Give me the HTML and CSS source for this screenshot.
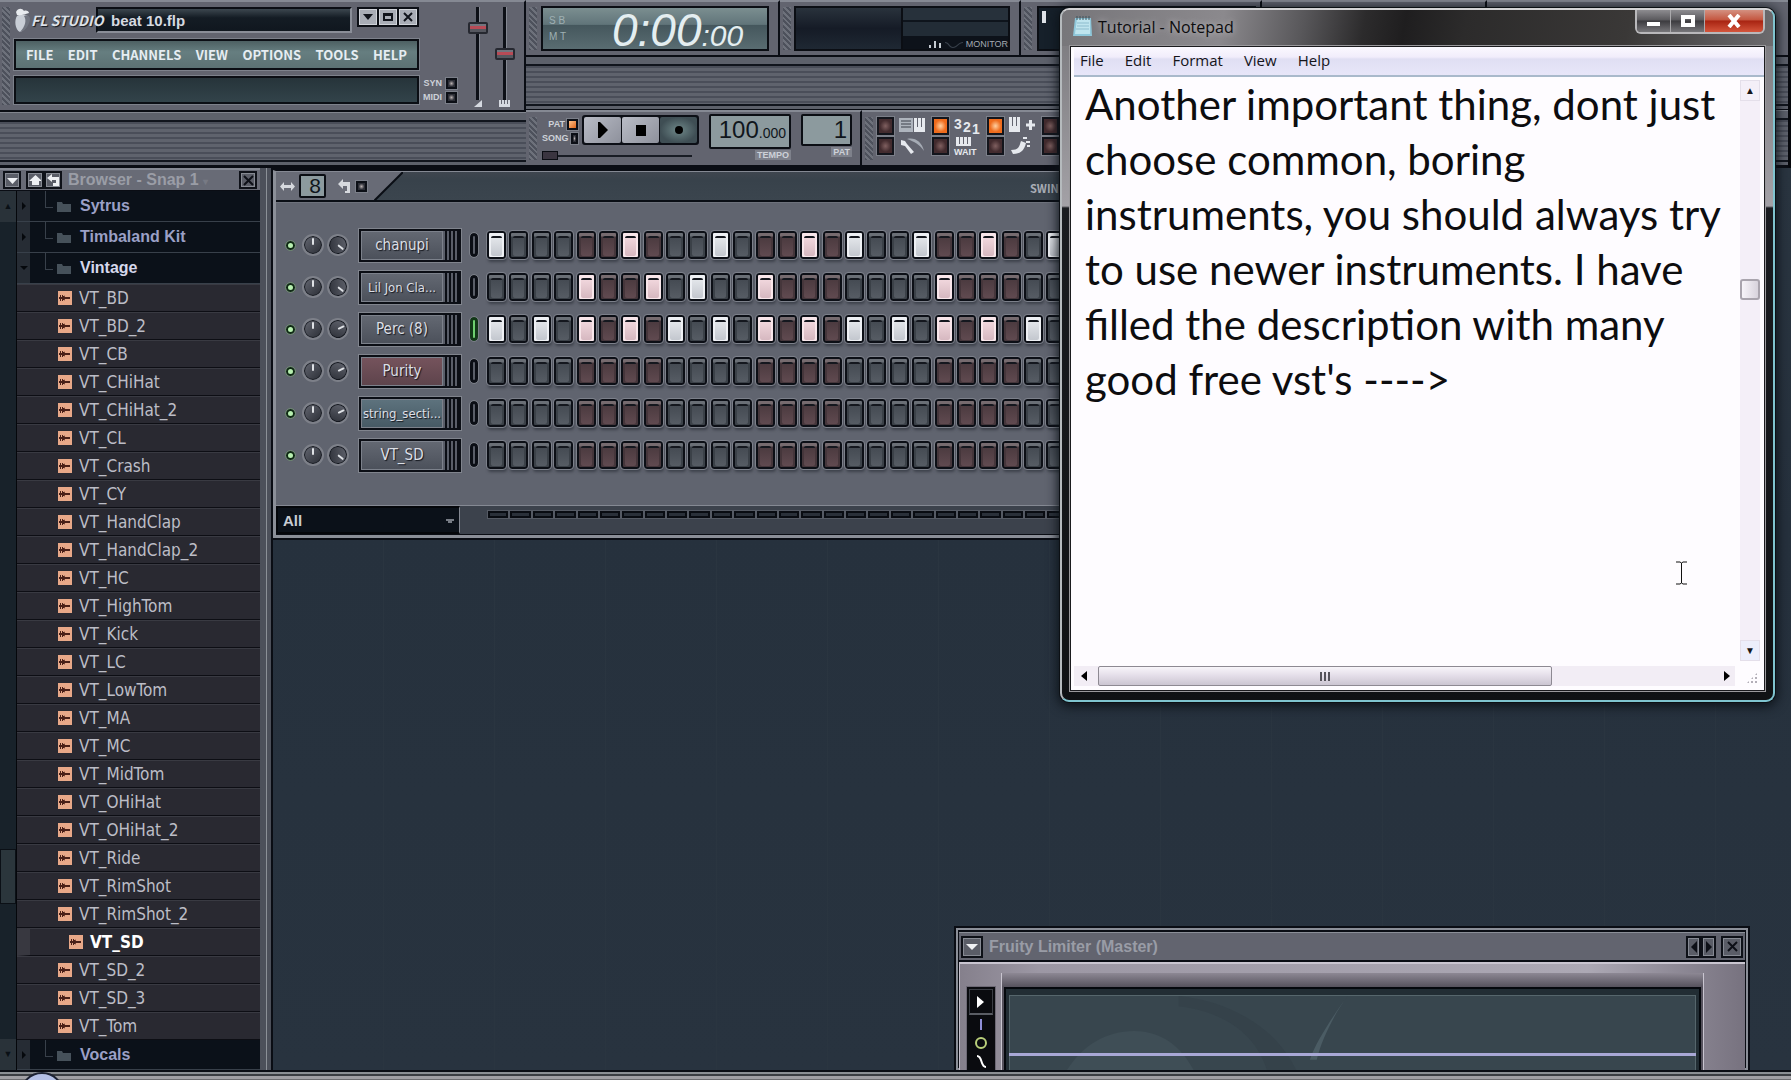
FILE: index.html
```
<!DOCTYPE html>
<html lang="en">

<head>
    <meta charset="UTF-8">
    <meta name="viewport" content="width=device-width, initial-scale=1.0">
    <title>FL Studio - beat 10.flp</title>
    <link rel="stylesheet" href="styles.css">
</head>

<body>
    <header class="toolbars">
        <div class="left-bars">
            <div class="main-panel">
                <div class="grip"></div>
                <div class="main-left">
                    <div class="title-row">
                        <div class="logo">
                            <svg width="17" height="25" viewBox="0 0 17 25">
                                <path d="M3 8C0 12 1 22 6 24c5-1 9-9 9-13 0-3-3-5-6-4-2-1-4 0-6 1z" fill="#c9ced6" />
                                <path d="M10 8c3 4 1 11-4 16 6-1 10-9 10-13 0-3-3-5-6-3z" fill="#70747f" />
                                <path d="M2 4c2-4 6-4 8-1 2-1 5 0 5 2-4 1-8 3-12 2z" fill="#e8ebef" />
                            </svg>
                            <span>FL STUDIO</span>
                        </div>
                        <div class="song-title">beat 10.flp</div>
                        <div class="window-buttons">
                            <button aria-label="Minimize"><svg width="12" height="10"><path d="M1 2h10L6 8z" /></svg></button>
                            <button aria-label="Maximize"><svg width="12" height="10"><path d="M1 1h10v8H1zM3 4v3h6V4z" fill-rule="evenodd" /></svg></button>
                            <button aria-label="Close"><svg width="12" height="10"><path d="M2 1l8 8M10 1L2 9" stroke="#10131b" stroke-width="2" /></svg></button>
                        </div>
                    </div>
                    <nav class="main-menu">
                        <button>FILE</button>
                        <button>EDIT</button>
                        <button>CHANNELS</button>
                        <button>VIEW</button>
                        <button>OPTIONS</button>
                        <button>TOOLS</button>
                        <button>HELP</button>
                    </nav>
                    <div class="hint-bar"></div>
                </div>
                <div class="io">
                    <div>SYN <i class="tiny-led"></i></div>
                    <div>MIDI <i class="tiny-led"></i></div>
                </div>
                <div class="fader">
                    <input type="range" value="81" aria-label="Main volume">
                    <svg width="8" height="7"><path d="M8 0v7H0z" /></svg>
                </div>
                <div class="fader">
                    <input type="range" value="49" aria-label="Main pitch">
                    <svg width="11" height="7"><path d="M0 0h2v4h1V0h2v4h1V0h2v4h1V0h2v7H0z" /></svg>
                </div>
            </div>
            <div class="stripes"></div>
        </div>

        <div class="right-bars">
            <div class="panel-row">
                <div class="panel time-panel">
                    <div class="grip"></div>
                    <div class="lcd clock">
                        <div class="clock-mode"><span>S B</span><span>M T</span></div>
                        <div class="clock-time">0:00<small>:00</small></div>
                    </div>
                </div>
                <div class="panel monitor-panel">
                    <div class="grip"></div>
                    <div class="scope">
                        <div class="scope-wave"></div>
                        <div class="scope-spectrum">
                            <svg width="34" height="10"><path d="M1 9V6M6 9V2M11 9V4" stroke="#c5cbd2" stroke-width="2" /><path d="M16 3c4 0 5 5 8 5s6-5 10-5v1c-4 0-6 5-10 5s-5-5-8-5z" fill="#38404b" /></svg>
                            <span>MONITOR</span>
                        </div>
                    </div>
                </div>
                <div class="panel cpu-panel">
                    <div class="grip"></div>
                    <div class="cpu"><i></i></div>
                </div>
                <div class="panel blank-panel"></div>
                <div class="panel last-panel"></div>
            </div>
            <div class="stripes"></div>
            <div class="panel-row">
                <div class="panel transport">
                    <div class="grip"></div>
                    <div class="transport-left">
                        <div class="play-row">
                            <div class="mode">
                                <div>PAT <i class="tiny-led lit"></i></div>
                                <div>SONG <i class="tiny-led"></i></div>
                            </div>
                            <div class="play-buttons">
                                <button aria-label="Play"><svg width="12" height="16"><path d="M1 0h2l8 8-8 8H1z" /></svg></button>
                                <button aria-label="Stop"><svg width="10" height="11"><path d="M0 0h10v11H0z" /></svg></button>
                                <button aria-label="Record" class="record"><svg width="12" height="12"><circle cx="6" cy="6" r="4" /></svg></button>
                            </div>
                        </div>
                        <input type="range" class="song-pos" value="0" aria-label="Song position">
                    </div>
                    <div class="readout tempo">
                        <output>100<small>.000</small></output>
                        <span>TEMPO</span>
                    </div>
                    <div class="readout pat">
                        <output>1</output>
                        <span>PAT</span>
                    </div>
                </div>
                <div class="panel switches">
                    <div class="grip"></div>
                    <div class="switch-grid" id="switches"></div>
                </div>
                <div class="stripes"></div>
            </div>
        </div>
    </header>

    <main>
        <aside class="browser">
            <div class="browser-title">
                <button class="box-btn" aria-label="Menu"><svg width="11" height="11"><path d="M0 3h11L5.500 9z" /></svg></button>
                <div class="btn-pair">
                    <button class="box-btn" aria-label="Up"><svg width="13" height="11"><path d="M6.500 0L13 6h-3v4H3V6H0z" /></svg></button>
                    <button class="box-btn" aria-label="Back"><svg width="13" height="12"><path d="M0 4l5-4v3h8v9H6V9h3V6H5v2z" /></svg></button>
                </div>
                <h2>Browser - Snap 1 <small>&#9662;</small></h2>
                <button class="box-btn close" aria-label="Close"><svg width="11" height="11"><path d="M1 1l9 9M10 1l-9 9" /></svg></button>
            </div>
            <div class="browser-body">
                <div class="tree-scroll">
                    <span class="arrow">&#9650;</span>
                    <span class="tree-thumb"></span>
                    <span class="arrow">&#9660;</span>
                </div>
                <ul class="tree" id="tree"></ul>
            </div>
        </aside>

        <section class="desktop">
            <div class="rack">
                <div class="rack-top">
                    <div class="rack-tab">
                        <svg width="15" height="11"><path d="M0 5.500L4 1v3h7V1l4 4.500L11 10V7H4v3z" /></svg>
                        <output>8</output>
                        <svg width="12" height="14"><path d="M0 5l5-5v3h7v11H7v-2h2V7H5v3z" /></svg>
                        <i class="tiny-led"></i>
                    </div>
                    <svg class="slant" width="29" height="29"><path d="M0 0h29L0 29z" fill="#686b76" /><path d="M29 0L0 29" stroke="#0a0e15" stroke-width="2" /></svg>
                    <span class="swing">SWING</span>
                </div>
                <div class="channels" id="channels"></div>
                <div class="rack-foot">
                    <select aria-label="Channel filter">
                        <option>All</option>
                    </select>
                    <div class="step-marks" id="marks"></div>
                </div>
            </div>

            <div class="limiter">
                <div class="limiter-title">
                    <button class="box-btn" aria-label="Menu"><svg width="12" height="11"><path d="M0 3h12L6 9z" /></svg></button>
                    <h2>Fruity Limiter (Master)</h2>
                    <div class="btn-pair">
                        <button class="box-btn slim" aria-label="Previous"><svg width="6" height="12"><path d="M6 0v12L0 6z" /></svg></button>
                        <button class="box-btn slim" aria-label="Next"><svg width="6" height="12"><path d="M0 0v12l6-6z" /></svg></button>
                    </div>
                    <button class="box-btn close" aria-label="Close"><svg width="11" height="11"><path d="M1 1l9 9M10 1l-9 9" /></svg></button>
                </div>
                <div class="limiter-body">
                    <div class="limiter-side">
                        <button aria-label="Expand"><svg width="8" height="12"><path d="M0 0l7 6-7 6z" fill="#fff" /></svg></button>
                        <div class="limiter-tools">
                            <svg width="14" height="54" fill="none" stroke-width="2">
                                <path d="M7 4v11" stroke="#8f8fd8" />
                                <circle cx="7" cy="28" r="5" stroke="#b9cf7a" />
                                <path d="M3 41c6 0 3 11 9 11" stroke="#fff" />
                            </svg>
                        </div>
                    </div>
                    <div class="limiter-bevel">
                        <div class="limiter-screen">
                            <svg viewBox="0 0 690 76" preserveAspectRatio="none">
                                <path d="M55 76C70 50 95 34 125 34s50 18 62 42z" fill="#3f4e56" />
                                <path d="M170 10c50 6 80 30 90 66h30C270 30 220 5 170 0z" fill="#35424a" />
                                <path d="M340 0c-15 20-32 45-38 62h7c5-20 18-45 31-62z" fill="#4b5c64" />
                            </svg>
                            <hr>
                        </div>
                    </div>
                </div>
            </div>
        </section>
    </main>

    <footer class="taskbar"><i class="orb"></i></footer>

    <div class="notepad">
        <div class="notepad-title">
            <svg width="21" height="23" viewBox="0 0 21 23">
                <path d="M3 3h16l1 18H1z" fill="#8fc7da" />
                <path d="M5 4h13v15H3z" fill="#bfe4ee" />
                <path d="M5 8h12M5 11h12M4 14h13" stroke="#8dbccd" />
                <path d="M5 1v4M8 1v4M11 1v4M14 1v4M17 1v4" stroke="#3d5661" />
            </svg>
            <h1>Tutorial - Notepad</h1>
            <div class="caption-buttons">
                <button aria-label="Minimize"><svg width="16" height="14"><path d="M1 8h13v4H1z" fill="#fff" /></svg></button>
                <button aria-label="Maximize"><svg width="16" height="14"><path d="M1 1h14v12H1zM5 5v4h6V5z" fill="#fff" fill-rule="evenodd" /></svg></button>
                <button aria-label="Close" class="close-btn"><svg width="14" height="14"><path d="M2 1l10 12M12 1L2 13" stroke="#fff" stroke-width="4" /></svg></button>
            </div>
        </div>
        <div class="notepad-inner">
            <nav class="notepad-menu">
                <button>File</button>
                <button>Edit</button>
                <button>Format</button>
                <button>View</button>
                <button>Help</button>
            </nav>
            <div class="notepad-page">
                <textarea aria-label="Text" spellcheck="false">Another important thing, dont just
choose common, boring
instruments, you should always try
to use newer instruments. I have
filled the description with many
good free vst's ----&gt;</textarea>
                <div class="v-scroll">
                    <span class="v-arrow">&#9650;</span>
                    <span class="v-thumb"></span>
                    <span class="v-arrow down">&#9660;</span>
                </div>
                <div class="h-scroll">
                    <svg width="6" height="10"><path d="M6 0v10L0 5z" /></svg>
                    <span class="h-thumb"><i></i><i></i><i></i></span>
                    <svg width="6" height="10"><path d="M0 0v10l6-5z" /></svg>
                </div>
                <div class="resize-grip"></div>
                <svg class="ibeam" width="11" height="24"><path d="M0 1h4l1.500 1L7 1h4M0 23h4l1.500-1L7 23h4M5.500 2v20" fill="none" stroke="#111" stroke-width="1" /></svg>
            </div>
        </div>
    </div>

    <script>
        const tree = document.querySelector("#tree")
        const channels = document.querySelector("#channels")
        const marks = document.querySelector("#marks")
        const switches = document.querySelector("#switches")

        const samples = ["BD", "BD_2", "CB", "CHiHat", "CHiHat_2", "CL", "Crash", "CY", "HandClap", "HandClap_2",
            "HC", "HighTom", "Kick", "LC", "LowTom", "MA", "MC", "MidTom", "OHiHat", "OHiHat_2", "Ride",
            "RimShot", "RimShot_2", "SD", "SD_2", "SD_3", "Tom"]

        const rack = [
            { name: "chanupi", pan: "low", on: [0, 6, 10, 14, 16, 19, 22, 25] },
            { name: "Lil Jon Cla...", pan: "low", small: true, on: [4, 7, 9, 12, 20] },
            { name: "Perc (8)", pan: "high", selected: true, on: [0, 2, 4, 6, 8, 10, 12, 14, 16, 18, 20, 22, 24] },
            { name: "Purity", pan: "high", color: "red", on: [] },
            { name: "string_secti...", pan: "high", color: "blue", small: true, on: [] },
            { name: "VT_SD", pan: "low", on: [] }
        ]

        const switchIcons = [
            [false, '<path d="M0 1h14v14H0z" fill="#aeb4bd" /><path d="M2 4h10M2 7h10M2 10h10" stroke="#3c414b" /><path d="M15 1h3v9h1V1h3v9h1V1h3v14H15z" />'],
            [true, '<text x="0" y="12">3</text><text x="9" y="15">2</text><text x="18" y="17">1</text>'],
            [true, '<path d="M0 0h3v9h1V0h3v9h1V0h3v15H0z" /><path d="M17 8h9M21.500 3v10" stroke="#e6e9ee" stroke-width="3" />'],
            [false, ''],
            [false, '<path d="M2 3l4 1 2 3 7 8-3 2-6-8-4-1z" /><path d="M8 2c8-2 15 3 17 12-5-7-9-9-17-12z" fill="#a5abb4" />'],
            [false, '<path d="M2 0h3v7h1V0h3v7h1V0h3v7h1V0h3v9H2z" /><text x="0" y="18" class="wait">WAIT</text>'],
            [false, '<path d="M2 13c8 0 8-3 10-9l5 2c-2 8-6 11-13 11z" /><path d="M14 1h4M17 5h4M18 9h3" stroke="#e6e9ee" stroke-width="2" />'],
            [false, '']
        ]

        function folder(name, cls) {
            return `
                <li class="folder ${cls}">
                    <span class="expander"></span>
                    <svg width="15" height="12"><path d="M0 2h5l1 2h9v8H0z" /></svg>
                    <span>${name}</span>
                </li>`
        }

        function sample(name) {
            return `
                <li class="sample ${name == "SD" ? "current" : ""}">
                    <svg width="14" height="14"><path d="M0 0h14v14H0z" fill="#e8a888" /><path d="M1 6h1V4h1v2h1V4h1v1h1V4l1 2h5v2H7l-1 2V9H5v1H4V8H3v2H2V8H1z" fill="#4a2018" /></svg>
                    <span>VT_${name}</span>
                </li>`
        }

        tree.innerHTML = folder("Sytrus", "") + folder("Timbaland Kit", "") + folder("Vintage", "open")
            + samples.map(sample).join("") + folder("Vocals", "last")

        channels.innerHTML = rack.map(ch => {
            let steps = ""
            for (let i = 0; i < 32; i++) {
                steps += `<input type="checkbox" aria-label="${ch.name} step ${i + 1}" ${ch.on.includes(i) ? "checked" : ""}>`
            }
            return `
                <div class="channel">
                    <i class="mute"></i>
                    <i class="knob"></i>
                    <i class="knob ${ch.pan}"></i>
                    <button class="channel-name ${ch.color || ""} ${ch.small ? "small" : ""}"><span>${ch.name}</span></button>
                    <i class="slot ${ch.selected ? "selected" : ""}"></i>
                    <div class="steps">${steps}</div>
                </div>`
        }).join("")

        marks.innerHTML = "<i></i>".repeat(32)

        switches.innerHTML = switchIcons.map(([lit, icon]) => `
            <i class="led ${lit ? "lit" : ""}"></i><svg width="28" height="18">${icon}</svg>`).join("")
    </script>
</body>

</html>
```
FILE: styles.css
```
* {
    box-sizing: border-box;
}

body {
    margin: 0;
    height: 100vh;
    display: flex;
    flex-direction: column;
    overflow: hidden;
    position: relative;
    background-color: #27323e;
    font-family: "Liberation Sans", Arial, sans-serif;
}

button {
    border: 0;
    padding: 0;
    background: none;
    font-family: inherit;
    color: inherit;
    display: flex;
    align-items: center;
    justify-content: center;
}

h1,
h2 {
    margin: 0;
    font-size: 16px;
}

/* toolbars */
.toolbars {
    display: grid;
    grid-template-columns: 526px 1fr;
    height: 168px;
    flex: none;
    border-right: 3px solid #07090d;
    border-bottom: 2px solid #0a0d14;
    color: #cdd1d8;
    background-color: #62646f;
}

.left-bars,
.right-bars {
    display: flex;
    flex-direction: column;
    min-width: 0;
}

.stripes {
    flex: 1;
    border-top: 1px solid #81858e;
    border-bottom: 1px solid #0a0d14;
    padding: 7px 0;
    background-color: #5d616b;
    position: relative;
}

.stripes::before {
    content: "";
    display: block;
    height: 100%;
    border-top: 2px solid #11151d;
    border-bottom: 2px solid #11151d;
    background: repeating-linear-gradient(#4a4e59 0 2px, #5f636d 2px 5px);
}

.grip {
    width: 8px;
    align-self: stretch;
    margin: 5px 0;
    background: repeating-linear-gradient(45deg, #4d515c 0 2px, #6d717b 2px 4px);
}

.main-panel {
    display: flex;
    height: 112px;
    padding: 1px 0;
    border-top: 2px solid #858993;
    border-right: 2px solid #0a0d14;
    border-bottom: 2px solid #0a0d14;
}

.main-panel .grip {
    margin: 4px 4px 4px 2px;
}

.main-left {
    width: 405px;
    padding-top: 4px;
    display: flex;
    flex-direction: column;
    gap: 6px;
}

.title-row {
    display: flex;
    height: 26px;
}

.logo {
    display: flex;
    align-items: center;
    width: 82px;
    font: italic bold 14px/24px "Noto Sans CJK SC", "Liberation Sans", sans-serif;
    color: #dde1e8;
    text-shadow: 1px 1px 1px #14171f;
    white-space: nowrap;
}

.logo svg {
    flex: none;
}

/* the logo runs a little over the title display */
.logo span {
    z-index: 1;
}

.song-title {
    flex: 1;
    border: 2px solid #0b0e14;
    border-right-color: #8a8e98;
    border-bottom-color: #8a8e98;
    background: linear-gradient(#3c474f, #141c24 40%, #10171f);
    color: #d5d9e0;
    font-weight: bold;
    font-size: 15px;
    line-height: 24px;
    padding-left: 13px;
}

.window-buttons {
    display: flex;
    gap: 2px;
    height: 20px;
    margin-left: 5px;
    padding: 2px;
    background-color: #0c0f16;
}

.window-buttons button {
    width: 18px;
    background-color: #a9adb6;
    border: 1px solid #d0d3d9;
}

.window-buttons svg {
    fill: #10131b;
}

.main-menu {
    display: flex;
    justify-content: space-between;
    height: 31px;
    padding: 0 10px;
    border: 2px solid #0b0e14;
    background: linear-gradient(#4d6062, #667e80 40%, #5c7274);
    outline: 1px solid #7d818b;
}

.main-menu button {
    font: bold 13px/26px "Noto Sans CJK SC", "Liberation Sans", sans-serif;
    color: #e6edf2;
}

.hint-bar {
    height: 28px;
    border: 2px solid #0b0e14;
    background: linear-gradient(#26343a, #32434a);
    outline: 1px solid #7d818b;
}

.io {
    display: flex;
    flex-direction: column;
    justify-content: flex-end;
    gap: 2px;
    width: 43px;
    padding: 0 5px 6px 0;
    font-size: 9px;
    font-weight: bold;
}

.io div,
.mode div {
    display: flex;
    justify-content: flex-end;
    align-items: center;
    gap: 4px;
    height: 12px;
}

.tiny-led {
    width: 11px;
    height: 11px;
    border: 2px solid #0c0f16;
    background: radial-gradient(#b8b0b0, #2c2e36 60%);
    outline: 1px solid #7b7f89;
}

.tiny-led.lit {
    background: linear-gradient(135deg, #ffc28a, #e0661c);
}

.fader {
    display: flex;
    flex-direction: column;
    align-items: center;
    width: 27px;
    padding-top: 4px;
}

.fader svg {
    fill: #d5d9e0;
}

.fader input {
    appearance: none;
    writing-mode: vertical-lr;
    direction: rtl;
    width: 20px;
    height: 93px;
    margin: 0;
    background: linear-gradient(90deg, transparent 8px, #0d1017 8px 11px, #858993 11px 12px, transparent 12px);
}

.fader input::-webkit-slider-thumb {
    appearance: none;
    width: 20px;
    height: 12px;
    border: 2px solid #262830;
    border-radius: 2px;
    background: linear-gradient(#72747e 2px, #b84a56 2px 5px, #55575f 5px);
}

.io+.fader {
    margin-left: 2px;
}

.panel-row {
    display: flex;
    height: 56px;
    flex: none;
}

.panel {
    display: flex;
    flex: none;
    border-top: 2px solid #858993;
    border-right: 2px solid #0a0d14;
    border-bottom: 1px solid #0a0d14;
    background-color: #62646f;
    padding-left: 3px;
}

.right-bars>.stripes {
    border-top-color: #0a0d14;
}

.time-panel {
    width: 254px;
}

.lcd {
    display: flex;
    margin: 4px 0 4px 4px;
    width: 228px;
    border: 2px solid #0b0e14;
    background: linear-gradient(#7b8e90, #61757a 40%, #45575d 42%, #596c71);
}

.clock-mode {
    display: flex;
    flex-direction: column;
    justify-content: space-around;
    padding: 5px 0 5px 6px;
    width: 69px;
    font-size: 10px;
    color: #9fb0b3;
}

.clock-time {
    font: italic 46px/44px "Liberation Sans", sans-serif;
    color: #e4eef0;
}

.clock-time small {
    font-size: 30px;
}

.monitor-panel {
    width: 241px;
}

.scope {
    display: flex;
    width: 216px;
    margin: 4px 0 4px 3px;
    border: 2px solid #0b0e14;
    background-color: #1c2530;
}

.scope-wave {
    width: 107px;
    border-right: 2px solid #0b0e14;
    background: linear-gradient(#29323c, #151b26 50%, #1f2833);
}

.scope-spectrum {
    flex: 1;
    display: flex;
    align-items: flex-end;
    justify-content: flex-end;
    font-size: 9px;
    background: linear-gradient(#27313b 12px, #0e141c 12px 14px, #222c36 14px 28px, #0d121a 28px);
}

.scope-spectrum span {
    margin-left: 3px;
    color: #a4a9b1;
}

.cpu-panel {
    width: 241px;
}

.cpu {
    flex: 1;
    margin: 4px 4px 4px 5px;
    padding: 3px;
    border: 2px solid #0b0e14;
    background-color: #16202a;
}

.cpu i {
    display: block;
    width: 4px;
    height: 12px;
    background-color: #dfe3e8;
}

.blank-panel {
    width: 225px;
}

.last-panel {
    flex: 1;
    border-right: 0;
}

/* transport */
.transport {
    width: 336px;
}

.transport-left {
    margin-left: 5px;
    width: 157px;
}

.play-row {
    display: flex;
    justify-content: space-between;
    padding-top: 3px;
}

.mode {
    width: 40px;
    padding: 2px 4px 0 0;
    font-size: 9px;
    font-weight: bold;
}

.mode div {
    height: 14px;
    gap: 2px;
}

.play-buttons {
    display: flex;
    height: 30px;
    background-color: #0c0f16;
    border: 2px solid #0c0f16;
    border-radius: 3px;
    gap: 1px;
}

.play-buttons button {
    width: 37px;
    background: linear-gradient(135deg, #b9bcc6, #8e919c);
    border-radius: 2px;
}

.play-buttons .record {
    background: radial-gradient(#6e8788, #3f4e54 70%);
}

.song-pos {
    appearance: none;
    width: 150px;
    height: 9px;
    margin: 6px 0 0;
    display: block;
    background: linear-gradient(transparent 4px, #181c24 4px 6px, transparent 6px);
}

.song-pos::-webkit-slider-thumb {
    appearance: none;
    width: 16px;
    height: 9px;
    border: 1px solid #0b0e14;
    background-color: #3a3540;
}

.readout {
    display: flex;
    flex-direction: column;
    align-items: flex-end;
    margin: 2px 0 0 10px;
    font-size: 9px;
    font-weight: bold;
}

.readout output,
.rack-tab output {
    width: 100%;
    border: 2px solid #0b0e14;
    border-radius: 2px;
    background-color: #8c9a9e;
    color: #10161c;
    text-align: right;
    font: 24px/28px "Liberation Sans", sans-serif;
    padding-right: 3px;
    white-space: nowrap;
}

.readout small {
    font-size: 14px;
}

.readout span {
    margin-top: 1px;
    padding: 0 2px;
    background-color: #7e818b;
}

.tempo {
    width: 82px;
}

.pat {
    width: 51px;
}

.switches {
    width: 260px;
}

.switch-grid {
    display: grid;
    grid-template-columns: repeat(4, 17px 28px);
    grid-auto-rows: 18px;
    column-gap: 5px;
    row-gap: 2px;
    padding: 5px 0 0 4px;
}

.switch-grid svg {
    fill: #e6e9ee;
    font: bold 14px "Liberation Sans", sans-serif;
    overflow: visible;
}

.switch-grid .wait {
    font-size: 9px;
}

.led {
    border: 2px solid #13151c;
    background: radial-gradient(#806060, #422b2e 60%);
    outline: 1px solid #7b7f89;
}

.led.lit {
    background: radial-gradient(#ffd0a0, #ee6b1c 60%);
}

/* main area */
main {
    flex: 1;
    min-height: 0;
    display: flex;
}

.browser {
    width: 273px;
    display: flex;
    flex-direction: column;
    border-right: 2px solid #0a0d14;
    background: linear-gradient(90deg, #0a0d14 260px, #4c505a 260px 266px, #8b9097 266px 267px, #4c505a 267px);
}

.browser-title {
    display: flex;
    align-items: center;
    height: 23px;
    width: 260px;
    padding: 0 3px;
    background-color: #686b76;
    border-bottom: 1px solid #0a0d14;
    border-top: 2px solid #858993;
}

.browser-title h2 {
    flex: 1;
    padding-left: 6px;
    color: #9a9da6;
    white-space: nowrap;
}

.browser-title small {
    font-size: 10px;
    color: #777a84;
}

.box-btn {
    width: 18px;
    height: 18px;
    border: 2px solid #0e1118;
    background-color: #5a5d67;
    outline: 1px solid #868a93;
    outline-offset: -3px;
}

.box-btn svg {
    fill: #eef0f3;
}

.box-btn.close svg {
    stroke: #0d1017;
    stroke-width: 2;
}

.btn-pair {
    display: flex;
}

.browser-title .btn-pair {
    margin-left: 5px;
}

.browser-body {
    flex: 1;
    min-height: 0;
    display: flex;
    width: 260px;
}

.tree-scroll {
    width: 17px;
    display: flex;
    flex-direction: column;
    border-right: 1px solid #05070b;
    background-color: #18222a;
}

.arrow {
    height: 31px;
    background-color: #293239;
    color: #0a1016;
    font-size: 9px;
    line-height: 31px;
    text-align: center;
}

.tree-thumb {
    height: 55px;
    margin: auto 0 135px;
    border: 1px solid #0b1016;
    background-color: #2b363c;
}

.tree {
    flex: 1;
    margin: 0;
    padding: 0;
    list-style: none;
    overflow: hidden;
}

.tree li {
    display: flex;
    align-items: center;
}

.folder {
    position: relative;
    height: 31px;
    border-bottom: 1px solid #38404a;
    background-color: #0b1119;
    color: #9ba0c6;
    font-weight: bold;
    font-size: 16px;
}

.folder svg {
    fill: #46515a;
    width: 14px;
    margin: 0 9px 0 14px;
}

.folder.open {
    color: #d6d8ec;
}

.folder.last {
    height: 30px;
}

.expander {
    display: flex;
    align-items: center;
    width: 13px;
    height: 100%;
    margin-right: 13px;
    background-color: #262c34;
}

.expander::before {
    content: "";
    margin-left: 5px;
    border: 4px solid transparent;
    border-left-color: #05080c;
}

.folder.open .expander::before {
    margin: 4px 0 0 3px;
    border-left-color: transparent;
    border-top-color: #05080c;
}

/* branch line joining the folders */
.expander::after {
    content: "";
    position: absolute;
    left: 28px;
    width: 7px;
    top: 0;
    height: 16px;
    border-left: 1px solid #38404a;
    border-bottom: 1px solid #38404a;
}

.sample {
    height: 28px;
    padding-left: 41px;
    border-top: 1px solid #393a42;
    border-bottom: 1px solid #0d0e14;
    background-color: #292931;
    color: #bcbdc6;
    font: 17px "DejaVu Sans Condensed", "Noto Sans", sans-serif;
}

.sample svg {
    margin-right: 7px;
}

.sample.current {
    padding-left: 39px;
    border-left: 13px solid #383840;
    color: #fff;
    font-weight: bold;
}

.desktop {
    flex: 1;
    position: relative;
    overflow: hidden;
    background:
        repeating-linear-gradient(90deg, transparent 0 110px, #2a3540 110px 111px),
        linear-gradient(#2a3540, #26313d 40%, #28333f);
}

/* channel rack */
.rack {
    position: absolute;
    left: 0;
    top: 2px;
    width: 960px;
    border: 1px solid #0a0d14;
    border-left: 3px solid #8b8f98;
    border-bottom: 3px solid #8b8f98;
    outline: 2px solid #0a0d14;
    background-color: #60646f;
}

.rack-top {
    display: flex;
    height: 31px;
    border-bottom: 2px solid #0a0e15;
    background: linear-gradient(#3f464f, #38424b 30%, #3b454e);
    border-top: 1px solid #858993;
}

.rack-tab {
    display: flex;
    align-items: center;
    width: 98px;
    padding-left: 4px;
    background-color: #686b76;
}

.rack-tab svg {
    fill: #d6d9de;
}

.rack-tab output {
    width: 27px;
    height: 24px;
    margin: 0 12px 0 4px;
    font-size: 21px;
    line-height: 20px;
}

.rack-tab .tiny-led {
    margin-left: 6px;
}

.swing {
    margin: 8px 0 0 627px;
    font: bold 11px/16px "Noto Sans CJK SC", "Liberation Sans", sans-serif;
    color: #a9aeb6;
}

.channels {
    padding: 21px 0 29px;
    border-top: 1px solid #6e727c;
}

.channel {
    display: flex;
    align-items: center;
    height: 42px;
    padding-left: 10px;
}

.mute {
    width: 9px;
    height: 9px;
    margin-right: 9px;
    border: 2px solid #0f2a14;
    border-radius: 50%;
    background-color: #b8f0b0;
    outline: 1px solid #6f8a72;
}

.knob {
    width: 18px;
    height: 18px;
    margin-right: 7px;
    border-radius: 50%;
    border: 1px solid #14171e;
    outline: 2px solid #7d8089;
    background: linear-gradient(135deg, #62656f, #2c2f37);
}

.knob::before {
    content: "";
    display: block;
    width: 2px;
    height: 7px;
    margin: 1px auto 0;
    background-color: #dfe2e6;
    border-radius: 1px;
}

.knob.low {
    transform: rotate(130deg);
}

.knob.high {
    transform: rotate(65deg);
}

.channel-name {
    width: 102px;
    height: 33px;
    margin: 0 9px 0 5px;
    flex: none;
    border: 2px solid #0b0e15;
    outline: 1px solid #80848d;
    justify-content: flex-start;
    background: repeating-linear-gradient(90deg, #0b0e15 0 2px, #5a5e69 2px 4px);
    color: #dcdfe5;
    font: 15px "DejaVu Sans Condensed", "Noto Sans", sans-serif;
}

.channel-name span {
    width: 82px;
    height: 29px;
    line-height: 27px;
    border: 1px solid #7c818b;
    background: linear-gradient(#636872, #4c515b);
    text-shadow: 1px 1px 1px #14171e;
    white-space: nowrap;
}

.channel-name.small {
    font-size: 13px;
}

.channel-name.red span {
    background: linear-gradient(#75535c, #5e444c);
}

.channel-name.blue span {
    background: linear-gradient(#5d727d, #475a65);
}

.slot {
    width: 8px;
    height: 24px;
    margin-right: 9px;
    border: 3px solid #0b0e15;
    border-radius: 4px;
    background-color: #5a5e68;
    outline: 1px solid #7b7f88;
}

.slot.selected {
    background-color: #6fd070;
    border-color: #123817;
}

.steps,
.step-marks {
    display: grid;
    grid-template-columns: repeat(32, 1fr);
    width: 716px;
}

.steps input {
    appearance: none;
    width: 19px;
    height: 28px;
    margin: 0;
    padding: 3px 2px;
    border: 2px solid #0c0f16;
    border-radius: 3px;
    outline: 1px solid #7c808a;
    background: linear-gradient(#6a6f76 3px, #3b4148 4px);
    box-shadow: 1px 3px 3px #3d414b;
}

.steps input::before {
    content: "";
    display: block;
    height: 100%;
    border-top: 2px solid #14171e;
    border-radius: 2px;
    background: linear-gradient(#454b53, #565c64);
}

.steps input:nth-child(8n+5),
.steps input:nth-child(8n+6),
.steps input:nth-child(8n+7),
.steps input:nth-child(8n+8) {
    background: linear-gradient(#766b6f 3px, #45363b 4px);
}

.steps input:nth-child(8n+5)::before,
.steps input:nth-child(8n+6)::before,
.steps input:nth-child(8n+7)::before,
.steps input:nth-child(8n+8)::before {
    background: linear-gradient(#4c3b40, #604a50);
}

.steps input:checked {
    background: #eef0f4;
}

.steps input:checked::before {
    background: linear-gradient(#e2e5e9, #c3c7ce);
}

.steps input:checked:nth-child(8n+5),
.steps input:checked:nth-child(8n+7),
.steps input:checked:nth-child(8n+8) {
    background: #f8e6ea;
}

.steps input:checked:nth-child(8n+5)::before,
.steps input:checked:nth-child(8n+7)::before,
.steps input:checked:nth-child(8n+8)::before {
    background: linear-gradient(#f0d6dc, #d6b8c0);
}

.rack-foot {
    display: flex;
    height: 30px;
    border-top: 1px solid #858993;
    border-bottom: 1px solid #0a0d14;
    background-color: #3c424c;
}

.rack-foot select {
    appearance: none;
    width: 184px;
    margin: 0 28px 0 0;
    padding: 0 5px;
    border: 2px solid #05070b;
    border-right: 1px solid #858993;
    border-radius: 0;
    background: linear-gradient(#777c85, #777c85) no-repeat 168px 11px / 8px 2px, linear-gradient(#777c85, #777c85) no-repeat 170px 13px / 4px 2px, #0b1119;
    color: #c8ccd3;
    font: bold 15px "Liberation Sans", sans-serif;
}

.step-marks {
    margin-top: 5px;
    height: 7px;
}

.step-marks i {
    margin-right: 2px;
    border: 2px solid #090c12;
    background-color: #2a3039;
    outline: 1px solid #555a64;
}

/* limiter */
.limiter {
    position: absolute;
    left: 681px;
    bottom: 0;
    width: 796px;
    height: 144px;
    border: 2px solid #0a0d14;
    border-bottom: 0;
    padding: 1px 3px 0;
    background-color: #0a0d14;
    box-shadow: inset 0 0 0 2px #8b8f98;
}

.limiter-title {
    display: flex;
    align-items: center;
    height: 30px;
    margin-top: 3px;
    padding: 0 2px;
    border-top: 1px solid #8b8f98;
    border-bottom: 2px solid #0a0d14;
    background-color: #62646f;
}

.limiter-title h2 {
    flex: 1;
    padding-left: 6px;
    color: #999ca6;
}

.limiter .box-btn {
    width: 22px;
    height: 22px;
}

.limiter .slim {
    width: 15px;
}

.limiter .slim svg {
    fill: #0d1017;
}

.limiter .btn-pair {
    margin-right: 5px;
}

.limiter-body {
    display: flex;
    height: 108px;
    border-left: 1px solid #c5c0cc;
    border-top: 2px solid #c9c5d0;
    background: linear-gradient(90deg, #85808c, #9c97a4 10%, #aca8b4 80%, #77727f);
}

.limiter-side {
    width: 28px;
    margin: 23px 6px 0 7px;
    background-color: #0a0b0f;
    border: 2px solid #0a0b0f;
    outline: 1px solid #6d6975;
}

.limiter-side button {
    width: 100%;
    height: 26px;
    border: 1px solid #3a3d44;
    border-bottom: 2px solid #5a5d64;
}

.limiter-tools {
    display: flex;
    justify-content: center;
}

.limiter-bevel {
    flex: 1;
    margin: 9px 41px 0 0;
    padding: 14px 2px 0;
    border-left: 1px solid #c9c5d0;
    border-right: 1px solid #c9c5d0;
    background: linear-gradient(#8d8894, #56525d 14px);
}

.limiter-screen {
    position: relative;
    height: 90px;
    padding: 6px 3px 0;
    border: 2px solid #05080d;
    background-color: #222d34;
}

.limiter-screen svg {
    display: block;
    width: 100%;
    height: 80px;
    border: 1px solid #56666c;
    background-color: #38464e;
}

.limiter-screen hr {
    position: absolute;
    left: 3px;
    right: 3px;
    top: 64px;
    margin: 0;
    border: 0;
    height: 3px;
    background-color: #a9a8d6;
}

.taskbar {
    flex: none;
    height: 10px;
    border-top: 2px solid #0a0d14;
    background: linear-gradient(#8b8f94 2px, #3a3d42 2px 4px, #a09fa4 4px 7px, #6c6c70 7px);
    overflow: hidden;
}

.orb {
    display: block;
    width: 44px;
    height: 44px;
    margin-left: 20px;
    border: 2px solid #1c2233;
    border-radius: 50%;
    background-color: #b4c0e6;
}

/* notepad */
.notepad {
    position: absolute;
    left: 1060px;
    top: 8px;
    width: 715px;
    height: 694px;
    display: flex;
    flex-direction: column;
    padding: 0 8px 9px 8px;
    border: 2px solid #7fc4cf;
    border-top-color: #d2d2d4;
    border-left-color: #b5babd;
    border-radius: 9px;
    background: linear-gradient(#77767a, #a3a1a6 196px, #1a1c20 198px, #101214);
    box-shadow: 0 0 0 1px #0c1014, 0 2px 12px 2px #0c1218;
}

.notepad-title {
    display: flex;
    height: 36px;
    margin: 0 -8px;
    padding: 5px 8px 0 10px;
    border-radius: 7px 7px 0 0;
    background: linear-gradient(100deg, #77767a, #8b898d 160px, #58575a 240px, #2c2b2c 300px, #1f1e1f 340px, #2c2b2b 400px, #3a3837 560px, #6c6b6e);
}

.notepad-title svg {
    flex: none;
}

.notepad-title h1 {
    flex: 1;
    padding-left: 5px;
    font: 16px/24px "Open Sans", "Noto Sans", sans-serif;
    color: #0c0c0e;
    text-shadow: 0 0 6px #c8c6ca;
}

.caption-buttons {
    display: flex;
    height: 24px;
    margin-top: -5px;
    border: 2px solid #b9b8bb;
    border-top: 0;
    border-radius: 0 0 6px 6px;
    overflow: hidden;
}

.caption-buttons button {
    width: 34px;
    border-right: 1px solid #aaa9ac;
    background: linear-gradient(#8d8c90, #5a595d 45%, #3c3b3f 50%, #77767a);
}

.caption-buttons .close-btn {
    width: 58px;
    border-right: 0;
    background: linear-gradient(#d49080, #c4563f 45%, #a82412 50%, #d4553c);
}

.notepad-inner {
    flex: 1;
    display: flex;
    flex-direction: column;
    border: 1px solid #1b1b1e;
    outline: 1px solid #9a999c;
    background-color: #fefcff;
}

.notepad-menu {
    display: flex;
    gap: 21px;
    height: 30px;
    margin-left: 3px;
    padding: 0 6px 2px;
    border-bottom: 2px solid #a9b9cb;
    background: linear-gradient(#fbf9ff, #f1edfb 10px, #e0dff3 12px, #e8e6f9);
}

.notepad-menu button {
    color: #14141a;
    font: 15px "Open Sans", "Noto Sans", sans-serif;
}

.notepad-page {
    flex: 1;
    position: relative;
    display: grid;
    grid-template-columns: 1fr 20px;
    grid-template-rows: 1fr 20px;
    gap: 5px;
    padding: 3px 4px 4px 3px;
}

.notepad-page textarea {
    border: 0;
    outline: 0;
    margin: -3px 0 0;
    padding: 0 0 0 11px;
    resize: none;
    overflow: hidden;
    white-space: pre;
    background: none;
    color: #0d0d0f;
    font: 42px/55px Lato, "Open Sans", sans-serif;
}

.v-scroll {
    display: flex;
    flex-direction: column;
    background-color: #f4eff8;
}

.v-arrow {
    height: 21px;
    border: 1px solid #e4dfea;
    color: #16161a;
    font-size: 10px;
    line-height: 19px;
    text-align: center;
}

.v-arrow.down {
    margin-top: auto;
    background-color: #eceefb;
}

.v-thumb {
    height: 21px;
    margin-top: 178px;
    border: 2px solid #a9a4ad;
    border-radius: 3px;
    background: linear-gradient(90deg, #f7f4f9, #d8d3dc);
}

.h-scroll {
    display: flex;
    align-items: center;
    padding: 0 5px 0 7px;
    background-color: #f2edf5;
}

.h-scroll svg:last-child {
    margin-left: auto;
}

.h-thumb {
    display: flex;
    align-items: center;
    justify-content: center;
    gap: 2px;
    width: 454px;
    height: 20px;
    margin-left: 11px;
    border: 1px solid #8d8992;
    border-radius: 2px;
    background: linear-gradient(#f8f5fa, #e3dde8 50%, #cbc5d1);
}

.h-thumb i {
    width: 2px;
    height: 9px;
    background-color: #55525a;
}

.resize-grip {
    margin: 6px 2px 2px 6px;
    background: radial-gradient(#b3afb8 1px, transparent 1px) 0 0 / 4px 4px;
    clip-path: polygon(100% 0, 100% 100%, 0 100%);
}

/* text cursor resting over the page */
.ibeam {
    position: absolute;
    right: 77px;
    bottom: 105px;
}
```
